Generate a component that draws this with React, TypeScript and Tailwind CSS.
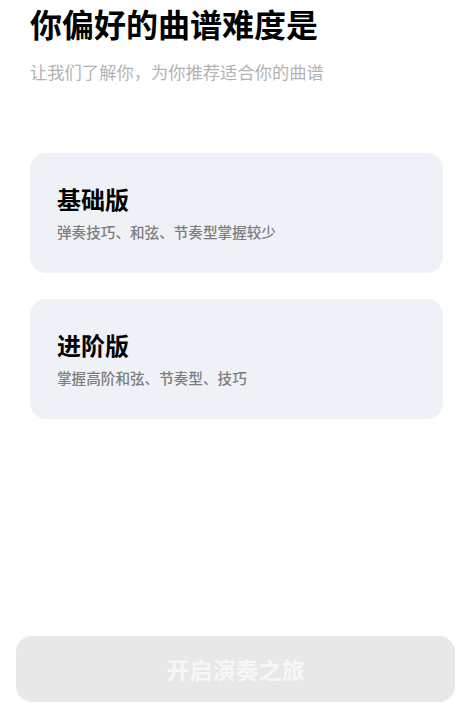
import React from 'react';

const levels = [
  { id: 'basic', title: '基础版', desc: '弹奏技巧、和弦、节奏型掌握较少' },
  { id: 'advanced', title: '进阶版', desc: '掌握高阶和弦、节奏型、技巧' },
];

export default function App() {
  return (
    <div
      className="flex min-h-[708px] w-full flex-col bg-white"
      style={{ fontFamily: '"Noto Sans CJK SC", "Noto Sans", sans-serif' }}
    >
      <div className="px-[30px] pt-[1px]">
        <h1 className="text-[32px] font-bold leading-[44px] text-black">你偏好的曲谱难度是</h1>
        <p className="mt-[15px] text-[17.3px] leading-[24px] text-[#b3b3b3]">让我们了解你，为你推荐适合你的曲谱</p>

        <div className="mt-[69px] flex flex-col gap-[26px]">
          {levels.map((lv) => (
            <button
              key={lv.id}
              className="flex h-[120px] w-[413px] flex-col justify-center rounded-[16px] bg-[#eef2f6] px-[27px] text-left"
            >
              <span className="text-[24px] font-bold leading-[32px] text-black">{lv.title}</span>
              <span className="mt-[6px] text-[14.6px] font-medium leading-[22px] text-[#7d7d7d]">{lv.desc}</span>
            </button>
          ))}
        </div>
      </div>

      <div className="mt-auto px-[16px] pb-[6px]">
        <button className="flex h-[66px] w-full items-center justify-center rounded-[16px] bg-[#e8e8e8] text-[23px] font-semibold text-[#f7f7f7]">
          开启演奏之旅
        </button>
      </div>
    </div>
  );
}
